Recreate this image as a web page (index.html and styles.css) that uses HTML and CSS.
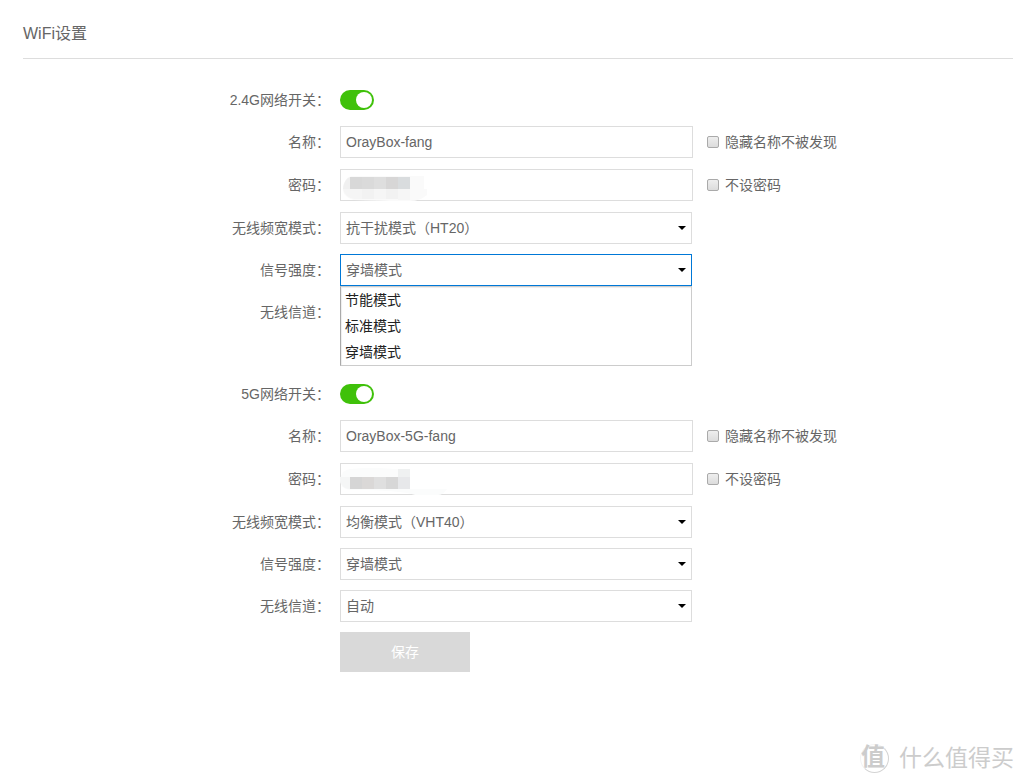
FILE: index.html
```html
<!DOCTYPE html>
<html lang="zh-CN">
<head>
<meta charset="utf-8">
<title>WiFi设置</title>
<link rel="stylesheet" href="styles.css">
</head>
<body>
<main class="page">
  <h1 class="title">WiFi设置</h1>
  <form class="form">
    <section class="band">
      <div class="row">
        <label class="label" for="on24">2.4G网络开关：</label>
        <input class="switch" type="checkbox" id="on24" checked>
      </div>
      <div class="row row-text">
        <label class="label" for="name24">名称：</label>
        <input class="text" type="text" id="name24" value="OrayBox-fang">
        <label class="check"><input class="box" type="checkbox">隐藏名称不被发现</label>
      </div>
      <div class="row row-text">
        <label class="label" for="pass24">密码：</label>
        <div class="field">
          <input class="text" type="text" id="pass24">
          <svg class="mosaic" width="104" height="32" viewBox="0 0 104 32" aria-hidden="true">
            <path fill="#fafafa" d="M12 7H84V20H87V26Q80 32 70 32H50L14 31Q2 28 3 18Q5 8 12 7Z"/>
            <path fill="#f0f0f0" d="M10 8V20H3Q4 10 10 8Z"/>
            <path fill="#f5f5f5" d="M3 20H22V30H14Q5 28 3 20Z"/>
            <path fill="#f2f2f2" d="M22 20H34V30H22ZM46 20H58V30H46Z"/>
            <path fill="#f6f6f6" d="M34 20H46V30H34ZM58 20H70V31H58Z"/>
            <path fill="#d8d8d8" d="M10 8H22V20H10Z"/>
            <path fill="#dadada" d="M22 8H34V20H22Z"/>
            <path fill="#dedede" d="M34 8H46V20H34Z"/>
            <path fill="#d7d6d6" d="M46 8H58V20H46Z"/>
            <path fill="#d9dcde" d="M58 8H70V20H58Z"/>
          </svg>
        </div>
        <label class="check"><input class="box" type="checkbox">不设密码</label>
      </div>
      <div class="row">
        <label class="label" for="width24">无线频宽模式：</label>
        <div class="picker"><select class="select" id="width24"><option>抗干扰模式（HT20）</option></select></div>
      </div>
      <div class="row">
        <label class="label" for="power24">信号强度：</label>
        <div class="picker">
          <select class="select select-open" id="power24"><option>穿墙模式</option></select>
          <ul class="menu" role="listbox">
            <li class="item" role="option">节能模式</li>
            <li class="item" role="option">标准模式</li>
            <li class="item" role="option">穿墙模式</li>
          </ul>
        </div>
      </div>
      <div class="row">
        <label class="label" for="channel24">无线信道：</label>
        <div class="picker"><select class="select" id="channel24"></select></div>
      </div>
    </section>
    <section class="band">
      <div class="row">
        <label class="label" for="on5">5G网络开关：</label>
        <input class="switch" type="checkbox" id="on5" checked>
      </div>
      <div class="row row-text">
        <label class="label" for="name5">名称：</label>
        <input class="text" type="text" id="name5" value="OrayBox-5G-fang">
        <label class="check"><input class="box" type="checkbox">隐藏名称不被发现</label>
      </div>
      <div class="row row-text">
        <label class="label" for="pass5">密码：</label>
        <div class="field">
          <input class="text" type="text" id="pass5">
          <svg class="mosaic" width="104" height="32" viewBox="0 0 104 32" aria-hidden="true">
            <path fill="#fbfcfc" d="M10 6Q30 4 55 6H70V26H107Q103 32 98 32H75Q60 27 12 27Q0 27 0 16Q2 7 10 6Z"/>
            <path fill="#f5f6f6" d="M0 14H10V26Q0 26 0 14Z"/>
            <path fill="#eff1f1" d="M58 6H70V14H58Z"/>
            <path fill="#d5d5d5" d="M10 14H22V26H10Z"/>
            <path fill="#dad8d7" d="M22 14H34V26H22Z"/>
            <path fill="#dfdfdf" d="M34 14H46V26H34Z"/>
            <path fill="#d7d7d7" d="M46 14H58V26H46Z"/>
            <path fill="#e7e8ea" d="M58 14H70V26H58Z"/>
          </svg>
        </div>
        <label class="check"><input class="box" type="checkbox">不设密码</label>
      </div>
      <div class="row">
        <label class="label" for="width5">无线频宽模式：</label>
        <div class="picker"><select class="select" id="width5"><option>均衡模式（VHT40）</option></select></div>
      </div>
      <div class="row">
        <label class="label" for="power5">信号强度：</label>
        <div class="picker"><select class="select" id="power5"><option>穿墙模式</option></select></div>
      </div>
      <div class="row">
        <label class="label" for="channel5">无线信道：</label>
        <div class="picker"><select class="select" id="channel5"><option>自动</option></select></div>
      </div>
      <div class="row">
        <button class="save" type="button">保存</button>
      </div>
    </section>
  </form>
</main>
<footer class="brand">
  <span class="seal">值</span>
  <span class="brand-name">什么值得买</span>
</footer>
</body>
</html>
```
FILE: styles.css
```css
* {
  box-sizing: border-box;
}

body {
  margin: 0;
  background: #fff;
  color: #666;
  font: 14px/20px "Liberation Sans", "Noto Sans CJK SC", sans-serif;
}

.page {
  padding: 0 13px 0 23px;
}

.title {
  margin: 0;
  padding: 22px 0 12px;
  border-bottom: 1px solid #ddd;
  font-size: 16px;
  font-weight: 400;
  line-height: 24px;
}

.form {
  display: flex;
  flex-direction: column;
  gap: 50px;
  padding-top: 25px;
}

.band {
  display: flex;
  flex-direction: column;
  gap: 10px;
}

.row {
  display: grid;
  grid-template-columns: 307px 353px auto;
  column-gap: 10px;
  align-items: center;
  justify-content: start;
  min-height: 32px;
}

.row-text {
  padding-bottom: 1px;
}

.label {
  text-align: right;
}

.switch {
  appearance: none;
  display: flex;
  justify-content: flex-end;
  width: 34px;
  height: 20px;
  margin: 0;
  padding: 2px;
  border-radius: 10px;
  background: #3fc10a;
}

.switch::before {
  content: "";
  width: 16px;
  height: 16px;
  border-radius: 50%;
  background: #fff;
}

.field,
.picker {
  position: relative;
}

.text,
.select {
  display: block;
  width: 100%;
  height: 32px;
  margin: 0;
  padding: 0 5px;
  border: 1px solid #ddd;
  border-radius: 0;
  background: #fff;
  color: #666;
  font: inherit;
  outline: none;
}

.mosaic {
  position: absolute;
  top: 0;
  left: 0;
  overflow: visible;
}

.picker {
  margin-right: 1px;
}

.picker::after {
  content: "";
  position: absolute;
  top: 14px;
  right: 6px;
  border: 4px solid transparent;
  border-top-color: #000;
  border-bottom: 0;
}

.select {
  appearance: none;
}

.select-open {
  border-color: #0078d7;
}

.menu {
  position: absolute;
  z-index: 1;
  top: 100%;
  left: 0;
  right: 0;
  margin: 0;
  padding: 0;
  border: 1px solid #ccc;
  border-left-color: #aaa;
  background: #fff;
  box-shadow: inset 1px 1px 1px #eee;
  list-style: none;
}

.item {
  padding: 0 4px;
  color: #222;
  line-height: 26px;
}

.check {
  display: flex;
  align-items: center;
  gap: 6px;
  padding-left: 4px;
}

.box {
  appearance: none;
  width: 12px;
  height: 12px;
  margin: 0;
  border: 1px solid #aaa;
  border-radius: 2px;
  background: linear-gradient(#eee, #dcdcdc);
}

.save {
  grid-column: 2;
  width: 130px;
  height: 40px;
  border: 0;
  background: #d9d9d9;
  color: #fff;
  font: inherit;
}

.brand {
  display: flex;
  align-items: center;
  justify-content: flex-end;
  gap: 10px;
  padding: 70px 12px 10px;
  color: #ccc;
}

.seal {
  width: 29px;
  height: 29px;
  border: 1px solid #d4d4d4;
  border-top-color: #f4f4f4;
  border-left-color: #f4f4f4;
  border-radius: 50%;
  font-size: 24px;
  font-weight: 700;
  line-height: 24px;
}

.brand-name {
  font-size: 23px;
  line-height: 32px;
}
```
